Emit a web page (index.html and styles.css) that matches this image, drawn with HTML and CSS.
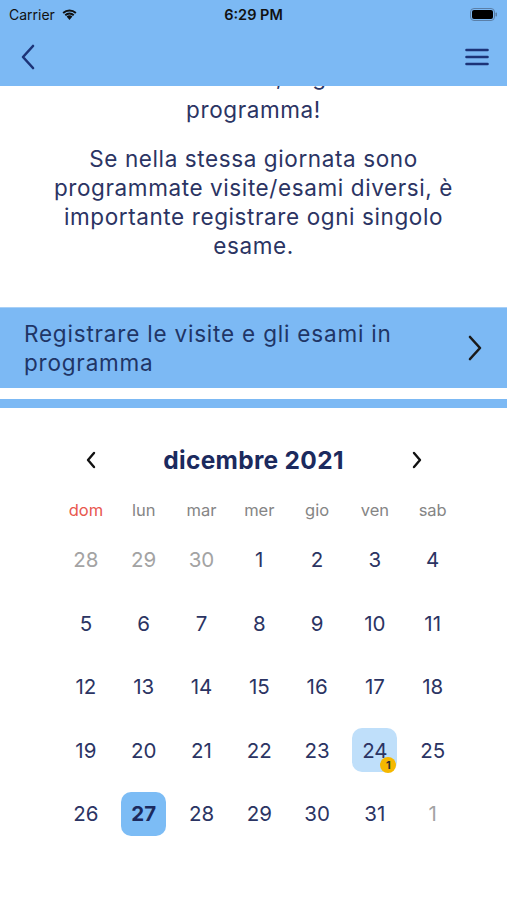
FILE: index.html
```html
<!DOCTYPE html>
<html lang="it">

<head>
    <meta charset="UTF-8">
    <meta name="viewport" content="width=device-width, initial-scale=1.0">
    <link rel="stylesheet" href="styles.css">
    <title>Calendario</title>
</head>

<body>

    <div class="top-bar">
        <div class="status-bar">
            <div class="status-left">
                <span>Carrier</span>
                <svg class="wifi" width="17" height="12" viewBox="0 0 17 12">
                    <path d="M8.5 12 L5.6 8.6 A4.4 4.4 0 0 1 11.4 8.6 Z" fill="#111" />
                    <path d="M3.6 6.5 A7.3 7.3 0 0 1 13.4 6.5 L12.1 8 A5.4 5.4 0 0 0 4.9 8 Z" fill="#111" />
                    <path d="M1.5 4.2 A10.3 10.3 0 0 1 15.5 4.2 L14.2 5.7 A8.3 8.3 0 0 0 2.8 5.7 Z" fill="#111" />
                </svg>
            </div>
            <div class="status-time">6:29 PM</div>
            <div class="status-right">
                <svg width="28" height="13" viewBox="0 0 28 13">
                    <rect x="0.5" y="0.5" width="24" height="12" rx="3.5" fill="none" stroke="#5a7fa8" />
                    <rect x="2" y="2" width="21" height="9" rx="2" fill="#000" />
                    <rect x="25.5" y="4.5" width="1.5" height="4" rx="0.7" fill="#5a7fa8" />
                </svg>
            </div>
        </div>
        <div class="nav-bar">
            <svg width="16" height="26" viewBox="0 0 16 26">
                <path d="M13 2 L3 13 L13 24" fill="none" stroke="#1c3377" stroke-width="2.6" stroke-linecap="round" stroke-linejoin="round" />
            </svg>
            <svg width="24" height="18" viewBox="0 0 24 18">
                <path d="M1.5 2 H22.5 M1.5 9 H22.5 M1.5 16 H22.5" stroke="#1c3377" stroke-width="2.6" stroke-linecap="round" />
            </svg>
        </div>
    </div>

    <div class="scroll-area">
        <div class="intro">
            <p class="intro-first">Prima della visita, registrala in<br>programma!</p>
            <p>Se nella stessa giornata sono programmate visite/esami diversi, è importante registrare ogni singolo esame.</p>
        </div>

        <div class="action-row">
            <span>Registrare le visite e gli esami in programma</span>
            <svg width="14" height="26" viewBox="0 0 14 26">
                <path d="M2 2 L12 13 L2 24" fill="none" stroke="#1a1a1a" stroke-width="2.6" stroke-linecap="round" stroke-linejoin="round" />
            </svg>
        </div>
        <div class="stripe"></div>

        <div class="calendar">
            <div class="calendar-header">
                <svg width="12" height="18" viewBox="0 0 12 18">
                    <path d="M9 2 L3 9 L9 16" fill="none" stroke="#111" stroke-width="2.4" stroke-linecap="round" stroke-linejoin="round" />
                </svg>
                <h2>dicembre 2021</h2>
                <svg width="12" height="18" viewBox="0 0 12 18">
                    <path d="M3 2 L9 9 L3 16" fill="none" stroke="#111" stroke-width="2.4" stroke-linecap="round" stroke-linejoin="round" />
                </svg>
            </div>
            <div class="weekdays">
                <div class="sunday">dom</div>
                <div>lun</div>
                <div>mar</div>
                <div>mer</div>
                <div>gio</div>
                <div>ven</div>
                <div>sab</div>
            </div>
            <div class="days" id="days"></div>
        </div>
    </div>

    <script>
        const days = document.getElementById('days');
        const cells = [];
        [28, 29, 30].forEach(function (d) { cells.push({ n: d, other: true }); });
        for (let d = 1; d <= 31; d++) cells.push({ n: d });
        cells.push({ n: 1, other: true });

        cells.forEach(function (cell) {
            const el = document.createElement('div');
            el.className = 'day';
            if (cell.other) el.classList.add('other');
            if (!cell.other && cell.n === 24) el.classList.add('marked');
            if (!cell.other && cell.n === 27) el.classList.add('today');
            el.innerHTML = `<span class="day-box">${cell.n}</span>`;
            if (el.classList.contains('marked')) {
                el.firstChild.innerHTML += '<span class="badge">1</span>';
            }
            days.appendChild(el);
        });
    </script>

</body>

</html>
```

FILE: styles.css
```css
body {
    font-family: 'Inter', 'Noto Sans', sans-serif;
    margin: 0;
    background-color: #fff;
    color: #2b3463;
    height: 900px;
    overflow: hidden;
}

.top-bar {
    position: relative;
    z-index: 2;
    background-color: #7cb9f4;
    height: 86px;
}

.status-bar {
    height: 28px;
    display: grid;
    grid-template-columns: 1fr auto 1fr;
    align-items: center;
    padding: 0 9px 0 9px;
    font-size: 14px;
    color: #111;
}

.status-left {
    display: flex;
    align-items: center;
    gap: 6px;
}

.status-time {
    font-weight: 600;
    font-size: 14.5px;
}

.status-right {
    display: flex;
    justify-content: flex-end;
}

.nav-bar {
    height: 58px;
    display: flex;
    justify-content: space-between;
    align-items: center;
    padding: 0 18px 0 20px;
}

.scroll-area {
    margin-top: -26px;
}

.intro {
    text-align: center;
    font-size: 22.5px;
    letter-spacing: 0.6px;
    line-height: 29px;
    padding: 0 40px;
}

.intro p {
    margin: 0 0 22px 0;
}

.intro .intro-first {
    line-height: 33px;
    margin-bottom: 18px;
}

.action-row {
    margin-top: 47px;
    background-color: #7cb9f4;
    border-top: 1px solid #a8d0f7;
    display: flex;
    justify-content: space-between;
    align-items: center;
    padding: 11px 25px 11px 24px;
    font-size: 22.5px;
    letter-spacing: 0.8px;
    line-height: 29px;
    color: #1f3566;
}

.action-row span {
    max-width: 400px;
}

.stripe {
    margin-top: 11px;
    height: 9px;
    background-color: #7cb9f4;
}

.calendar {
    padding-top: 37px;
}

.calendar-header {
    display: flex;
    justify-content: space-between;
    align-items: center;
    width: 338px;
    margin: 0 auto;
}

.calendar-header h2 {
    margin: 0;
    font-size: 24.5px;
    letter-spacing: 0.3px;
    font-weight: 700;
    color: #1b2a5e;
}

.weekdays,
.days {
    display: grid;
    grid-template-columns: repeat(7, 57.8px);
    margin-left: 57px;
    text-align: center;
}

.weekdays {
    margin-top: 18px;
    font-size: 16.5px;
    color: #858585;
    height: 34px;
    line-height: 34px;
}

.weekdays .sunday {
    color: #e8584f;
}

.days {
    margin-top: 1px;
    grid-auto-rows: 63.5px;
    font-size: 20.5px;
}

.day {
    display: flex;
    justify-content: center;
    align-items: center;
}

.day-box {
    position: relative;
    width: 45px;
    height: 44px;
    border-radius: 10px;
    display: flex;
    justify-content: center;
    align-items: center;
}

.day.other {
    color: #a3a3a3;
}

.day.marked .day-box {
    background-color: #bfdffa;
}

.day.today .day-box {
    background-color: #7cbcf5;
    font-weight: 700;
    color: #1b2a5e;
}

.badge {
    position: absolute;
    right: 1px;
    bottom: -1px;
    width: 16px;
    height: 16px;
    border-radius: 50%;
    background-color: #f5b800;
    color: #2b2b2b;
    font-size: 11px;
    font-weight: 700;
    line-height: 16px;
    text-align: center;
    letter-spacing: 0;
}
```
